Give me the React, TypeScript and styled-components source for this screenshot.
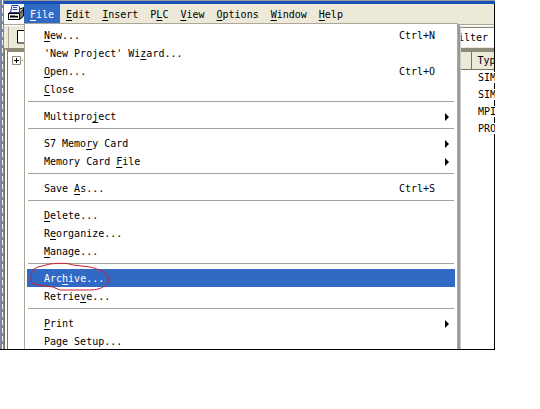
import React from 'react';
import styled, { createGlobalStyle, css } from 'styled-components';

const FACE = '#ece9d8';
const BLUE = '#316ac5';
const OLIVE = '#8d8a78';

const GlobalStyle = createGlobalStyle`
  * { box-sizing: border-box; }
  body { margin: 0; background: #fff; }
  body, button, input, table {
    font-family: "DejaVu Sans Mono", "Liberation Mono", monospace;
    font-size: 10px;
    color: #000;
  }
  button { border: 0; margin: 0; background: none; text-align: left; }
  u { text-underline-offset: 2px; text-decoration-thickness: 1px; text-decoration-skip-ink: none; }
`;

const Screen = styled.div`
  position: relative;
  display: grid;
  grid-template-columns: 4px minmax(0, 1fr);
  margin-right: 45px;
  overflow: hidden;
  border-bottom: 1px solid #000;
  &::after {
    content: '';
    position: absolute;
    top: 4px;
    right: 0;
    bottom: 0;
    width: 1px;
    background: #000;
  }
`;

const DesktopEdge = styled.div`
  background:
    repeating-linear-gradient(#f4f4f4 0 5px, #78819b 5px 8px) 2px 0 / 1px 100% no-repeat,
    #7c859f;
`;

const AppWindow = styled.div`
  border-top: 1px solid #9c9a94;
`;

const TitleEdge = styled.div`
  height: 3px;
  background: #1650b8;
`;

const MenuBar = styled.nav`
  display: flex;
  height: 20px;
  background: ${FACE};
`;

const AppIcon = styled.span`
  width: 20px;
  background: #fff;
  svg { display: block; }
`;

const MenuButton = styled.button<{ $open?: boolean }>`
  padding: 1px 6px 0;
  line-height: 19px;
  white-space: nowrap;
  ${({ $open }) => $open && css`background: ${BLUE}; color: #fff;`}
`;

const Stage = styled.div`
  display: grid;
  grid-template-columns: minmax(0, 1fr);
  > * { grid-area: 1 / 1; }
`;

const Backdrop = styled.div`
  display: flex;
  flex-direction: column;
`;

const ToolBar = styled.div`
  display: flex;
  justify-content: space-between;
  height: 24px;
  border-top: 1px solid #aca899;
  background: ${FACE};
  box-shadow: inset 0 1px #fff;
`;

const ToolGroup = styled.div`
  margin: 2px 0 0 4px;
  padding: 3px 0 0 8px;
  border-left: 1px solid #aca899;
`;

const ToolButton = styled.button`
  padding: 0;
  svg { display: block; }
`;

const FilterBox = styled.input`
  width: 43px;
  height: 20px;
  margin-top: 2px;
  padding: 0 6px;
  border: 0;
  border-top: 1px solid ${OLIVE};
  border-radius: 0;
  background: #fff;
`;

const Client = styled.div`
  display: flex;
  flex: 1;
  justify-content: space-between;
  border-top: 4px solid ${OLIVE};
  border-left: 4px double #77745f;
`;

const TreeToggle = styled.button`
  align-self: flex-start;
  margin: 4px 0 0 4px;
  padding: 0;
  svg { display: block; }
`;

const ObjectTable = styled.table`
  align-self: flex-start;
  width: 36px;
  border-collapse: collapse;
  table-layout: fixed;
`;

const HeaderCell = styled.th<{ $wide?: boolean }>`
  width: ${({ $wide }) => ($wide ? '24px' : '12px')};
  height: 17px;
  padding: 0 0 0 ${({ $wide }) => ($wide ? '6px' : '0')};
  border-left: ${({ $wide }) => ($wide ? '1px solid #77745f' : '0')};
  border-bottom: 1px solid #77745f;
  background: ${FACE};
  font-weight: normal;
  text-align: left;
`;

const Cell = styled.td`
  height: 17px;
  padding: 0 0 0 7px;
  line-height: 11px;
  span {
    position: relative;
    z-index: 1;
    background: #fff;
  }
`;

const Menu = styled.div`
  position: relative;
  z-index: 2;
  margin: -1px 37px -1px 20px;
  padding: 2px 2px 0;
  border: 1px solid #aca899;
  border-bottom: 0;
  background: #fff;
  box-shadow: 2px 2px #999, 3px 3px #ccc;
`;

const Item = styled.button<{ $active?: boolean }>`
  position: relative;
  display: flex;
  align-items: center;
  justify-content: space-between;
  width: 100%;
  height: 18px;
  padding: 1px 20px 0 17px;
  line-height: 17px;
  ${({ $active }) => $active && css`background: ${BLUE}; color: #fff;`}
`;

const Arrow = styled.svg`
  margin-right: -14px;
`;

const Divider = styled.hr`
  height: 1px;
  margin: 3px 1px 5px;
  border: 0;
  background: #a5a298;
`;

const RedMark = styled.svg`
  position: absolute;
  top: -7px;
  left: 3px;
  overflow: visible;
  pointer-events: none;
`;

type Entry = { text: string; hot?: number; keys?: string; sub?: boolean; marked?: boolean };

const groups: Entry[][] = [
  [
    { text: 'New...', hot: 0, keys: 'Ctrl+N' },
    { text: "'New Project' Wizard...", hot: 16 },
    { text: 'Open...', hot: 0, keys: 'Ctrl+O' },
    { text: 'Close', hot: 0 },
  ],
  [{ text: 'Multiproject', hot: 8, sub: true }],
  [
    { text: 'S7 Memory Card', hot: 7, sub: true },
    { text: 'Memory Card File', hot: 12, sub: true },
  ],
  [{ text: 'Save As...', hot: 5, keys: 'Ctrl+S' }],
  [
    { text: 'Delete...', hot: 0 },
    { text: 'Reorganize...', hot: 1 },
    { text: 'Manage...', hot: 0 },
  ],
  [
    { text: 'Archive...', hot: 3, marked: true },
    { text: 'Retrieve...', hot: 6 },
  ],
  [
    { text: 'Print', hot: 0, sub: true },
    { text: 'Page Setup...' },
  ],
];

const menus: [string, number][] = [
  ['File', 0], ['Edit', 0], ['Insert', 0], ['PLC', 1],
  ['View', 0], ['Options', 0], ['Window', 0], ['Help', 0],
];

const Label = ({ text, hot = -1 }: { text: string; hot?: number }) =>
  hot < 0 ? <span>{text}</span> : (
    <span>{text.slice(0, hot)}<u>{text[hot]}</u>{text.slice(hot + 1)}</span>
  );

const PrinterIcon = () => (
  <svg width="20" height="19" viewBox="0 0 20 19" aria-hidden="true">
    <path d="M4.500 9.500L9 5.500h6l4.500-2v8.500L15.500 15.500H4.500z" fill="#d4d0c8" stroke="#000" />
    <path d="M15.500 9.500L19.500 5v7L15.500 15.500z" fill="#777" stroke="#000" />
    <path d="M8 1.500h6l1.500 1.500v5.500H6.500z" fill="#fff" stroke="#1c2f94" />
    <path d="M9 3.500h4M8.500 5.500h5" stroke="#2647c8" />
    <path d="M4.500 9.500h11v6h-11z" fill="#eee" stroke="#000" />
    <path d="M6 12.500h8" stroke="#000" strokeWidth="2" />
    <path d="M11 11.500h3" stroke="#e3d94a" />
  </svg>
);

export default function App() {
  return (
    <>
      <GlobalStyle />
      <Screen>
        <DesktopEdge />
        <AppWindow>
          <TitleEdge />
          <MenuBar>
            <AppIcon><PrinterIcon /></AppIcon>
            {menus.map(([text, hot]) => (
              <MenuButton key={text} $open={text === 'File'}><Label text={text} hot={hot} /></MenuButton>
            ))}
          </MenuBar>
          <Stage>
            <Backdrop>
              <ToolBar>
                <ToolGroup>
                  <ToolButton aria-label="New">
                    <svg width="11" height="14" viewBox="0 0 11 14">
                      <path d="M.5.5h7l3 3v9.500H.5z" fill="#fff" stroke="#000" />
                    </svg>
                  </ToolButton>
                </ToolGroup>
                <FilterBox aria-label="Filter" defaultValue="ilter" />
              </ToolBar>
              <Client>
                <TreeToggle aria-label="Expand">
                  <svg width="14" height="9" viewBox="0 0 14 9">
                    <path d="M.5.5h8v8h-8z" fill="#fff" stroke="#8d8a78" />
                    <path d="M2 4.500h5M4.500 2v5" stroke="#000" />
                    <path d="M10 4.500h4" stroke="#8d8a78" strokeDasharray="1 1" />
                  </svg>
                </TreeToggle>
                <ObjectTable>
                  <thead>
                    <tr><HeaderCell /><HeaderCell $wide>Typ</HeaderCell></tr>
                  </thead>
                  <tbody>
                    {['SIM', 'SIM', 'MPI', 'PRO'].map((type, i) => (
                      <tr key={i}><td /><Cell><span>{type}</span></Cell></tr>
                    ))}
                  </tbody>
                </ObjectTable>
              </Client>
            </Backdrop>
            <Menu>
              {groups.map((entries, g) => (
                <React.Fragment key={g}>
                  {g > 0 && <Divider />}
                  {entries.map(({ text, hot, keys, sub, marked }) => (
                    <Item key={text} $active={marked}>
                      <Label text={text} hot={hot} />
                      {keys && <span>{keys}</span>}
                      {sub && (
                        <Arrow width="4" height="8" viewBox="0 0 4 8" aria-hidden="true">
                          <path d="M0 0L4 4L0 8z" />
                        </Arrow>
                      )}
                      {marked && (
                        <RedMark width="82" height="30" viewBox="0 0 82 30" aria-hidden="true">
                          <path
                            d="M1 16C1 12 2 9 4 7L8 5L20 2C30 1 38 1 43 3L60 5C69 7 76 11 78 14C80 18 79 22 73 25C68 28 62 28 53 28H30L23 25C15 24 9 23 3 22L1 19z"
                            fill="none"
                            stroke="#c8202c"
                          />
                        </RedMark>
                      )}
                    </Item>
                  ))}
                </React.Fragment>
              ))}
            </Menu>
          </Stage>
        </AppWindow>
      </Screen>
    </>
  );
}
